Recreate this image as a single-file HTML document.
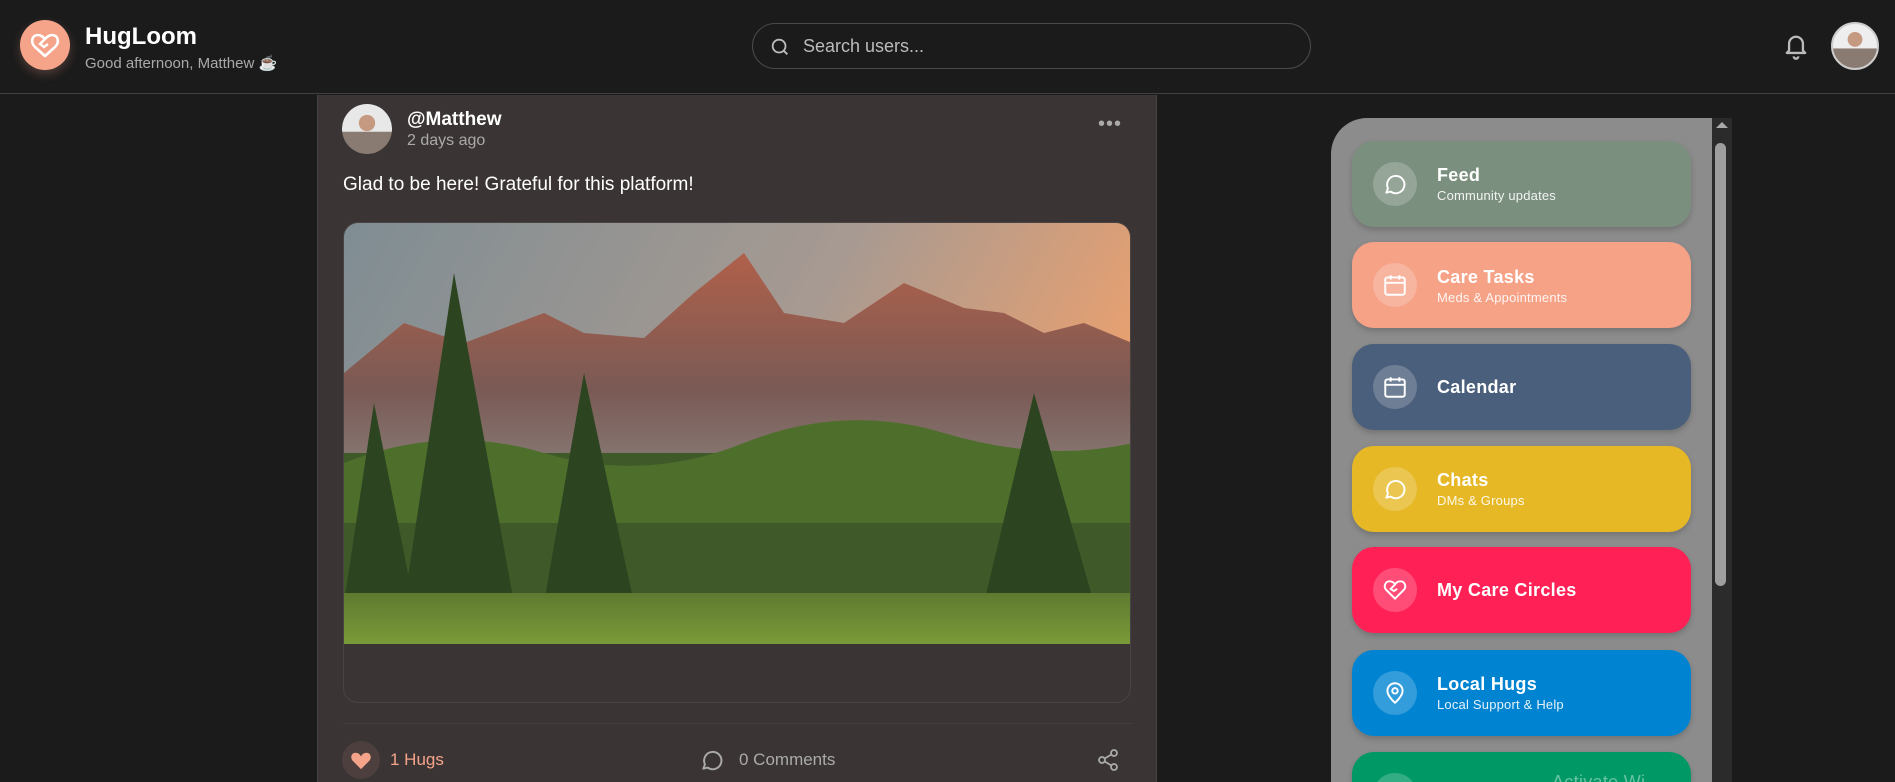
<!DOCTYPE html>
<html style="overflow:hidden;width:1895px;height:782px"><head><meta charset="utf-8"><style>
*{margin:0;padding:0;box-sizing:border-box}
body{width:1895px;height:782px;overflow:hidden;background:#1b1b1b;font-family:"Liberation Sans",sans-serif;position:relative;color:#fff}
.hdr{position:absolute;left:0;top:0;width:1895px;height:94px;border-bottom:1px solid #404040;background:#1b1b1b}
.abs{position:absolute}
.card{position:absolute;left:317px;top:95px;width:840px;height:687px;background:#3b3434;border-left:1px solid #444;border-right:1px solid #444}
.panel{position:absolute;left:1331px;top:118px;width:385px;height:664px;background:#8c8c8c;border-top-left-radius:36px}
.clip{position:absolute;left:0;top:0;width:1895px;height:782px;overflow:hidden}
.nav{position:absolute;left:1352px;width:339px;height:86px;border-radius:22px;box-shadow:0 3px 6px rgba(0,0,0,.18)}
.nav .ic{position:absolute;left:21px;top:21px;width:44px;height:44px;border-radius:50%;background:rgba(255,255,255,.2)}
.nav .ic svg{position:absolute;left:9px;top:9px}
.nav .t{position:absolute;left:85px;font-weight:bold;font-size:18px;letter-spacing:.3px}
.nav .s{position:absolute;left:85px;font-size:13px;opacity:.9;letter-spacing:.2px}
</style></head><body>
<div class="clip">
<div class="hdr">
 <div class="abs" style="left:20px;top:20px;width:50px;height:50px;border-radius:50%;background:#f5a48a;box-shadow:0 4px 10px rgba(245,164,138,.25)">
  <svg width="50" height="50" viewBox="0 0 50 50"><path d="M25 36 L15 27 C10 22 12 15 18 15 C21 15 23 17 25 19 C27 17 29 15 32 15 C38 15 40 22 35 27 Z" fill="none" stroke="#fff" stroke-width="2.6" stroke-linejoin="round"/><path d="M25 19 L20 24 L24 27 L28 24" fill="none" stroke="#fff" stroke-width="2.4"/></svg>
 </div>
 <div class="abs" style="left:85px;top:23px;font-size:24px;font-weight:bold">HugLoom</div>
 <div class="abs" style="left:85px;top:54px;font-size:15px;color:#aaa">Good afternoon, Matthew ☕</div>
 <div class="abs" style="left:752px;top:23px;width:559px;height:46px;border:1px solid #4a4a4a;border-radius:23px;background:#1b1b1b">
  <svg class="abs" style="left:16px;top:12px" width="22" height="22" viewBox="0 0 24 24" fill="none" stroke="#bbb" stroke-width="2"><circle cx="11" cy="11" r="7"/><path d="M16 16l4 4"/></svg>
  <div class="abs" style="left:50px;top:12px;font-size:18px;color:#bbb">Search users...</div>
 </div>
 <svg class="abs" style="left:1782px;top:31px" width="28" height="30" viewBox="0 0 24 26" fill="none" stroke="#bbb" stroke-width="2"><path d="M6 17V11a6 6 0 0 1 12 0v6l2 2H4z" stroke-linejoin="round"/><path d="M10 22a2 2 0 0 0 4 0"/></svg>
 <div class="abs" style="left:1831px;top:22px;width:48px;height:48px;border-radius:50%;background:radial-gradient(circle at 50% 35%,#c59a80 0 20%,transparent 21%),linear-gradient(#eee 0 55%,#8a7b72 56%);border:2px solid #ccc"></div>
</div>

<div class="card">
 <div class="abs" style="left:24px;top:9px;width:50px;height:50px;border-radius:50%;background:radial-gradient(circle at 50% 38%,#c59a80 0 20%,transparent 21%),linear-gradient(#e8e8e8 0 55%,#8a7b72 56%)"></div>
 <div class="abs" style="left:89px;top:14px;font-size:19px;font-weight:bold">@Matthew</div>
 <div class="abs" style="left:89px;top:37px;font-size:16px;color:#aaa">2 days ago</div>
 <div class="abs" style="left:780px;top:24px;font-size:20px;color:#aaa;letter-spacing:1px;line-height:10px">•••</div>
 <div class="abs" style="left:25px;top:79px;font-size:19px">Glad to be here! Grateful for this platform!</div>
 <div class="abs" style="left:25px;top:127px;width:788px;height:481px;border:1px solid #4a4343;border-radius:15px;overflow:hidden">
  <svg width="788" height="421" viewBox="0 0 788 421" preserveAspectRatio="none">
   <defs><linearGradient id="sk" x1="0" y1="0" x2="1" y2="0.3"><stop offset="0" stop-color="#7f8d93"/><stop offset=".6" stop-color="#a79a92"/><stop offset="1" stop-color="#e8a070"/></linearGradient>
   <linearGradient id="mt" x1="0" y1="0" x2="0" y2="1"><stop offset="0" stop-color="#b0604a"/><stop offset=".6" stop-color="#7a5a55"/><stop offset="1" stop-color="#8a7f7a"/></linearGradient>
   <linearGradient id="gr" x1="0" y1="0" x2="0" y2="1"><stop offset="0" stop-color="#5d7a30"/><stop offset="1" stop-color="#7a9a38"/></linearGradient></defs>
   <rect width="788" height="421" fill="url(#sk)"/>
   <path d="M0 150 L60 100 L120 120 L200 90 L240 110 L300 115 L350 70 L400 30 L440 90 L500 100 L560 60 L620 85 L660 90 L700 110 L740 100 L788 120 L788 260 L0 260Z" fill="url(#mt)"/>
   <rect y="230" width="788" height="191" fill="#3f5a28"/>
   <path d="M0 240 Q100 200 200 230 T400 220 T600 210 T788 220 L788 300 L0 300Z" fill="#4e6f2c"/>
   <path d="M60 380 L110 50 L170 380Z M200 380 L240 150 L290 380Z M640 380 L690 170 L750 380Z M0 380 L30 180 L70 380Z" fill="#2c4520"/>
   <rect y="370" width="788" height="51" fill="url(#gr)"/>
  </svg>
 </div>
 <div class="abs" style="left:25px;top:628px;width:790px;height:1px;background:#463e3e"></div>
 <div class="abs" style="left:24px;top:646px;width:38px;height:38px;border-radius:50%;background:#4c3f3d">
  <svg class="abs" style="left:8px;top:9px" width="22" height="20" viewBox="0 0 24 22"><path d="M12 21L3 12C0 9 1 3 6 3c3 0 5 2 6 4 1-2 3-4 6-4 5 0 6 6 3 9z" fill="#f5a48a"/></svg>
 </div>
 <div class="abs" style="left:72px;top:655px;font-size:17px;color:#f5a48a">1 Hugs</div>
 <svg class="abs" style="left:381px;top:652px" width="26" height="26" viewBox="0 0 24 24" fill="none" stroke="#aaa" stroke-width="1.8"><path d="M4 20l1.5-4A8 8 0 1 1 8 19z" stroke-linejoin="round"/></svg>
 <div class="abs" style="left:421px;top:655px;font-size:17px;color:#aaa">0 Comments</div>
 <svg class="abs" style="left:778px;top:652px" width="24" height="26" viewBox="0 0 24 24" fill="none" stroke="#aaa" stroke-width="1.8"><circle cx="18" cy="5" r="3"/><circle cx="6" cy="12" r="3"/><circle cx="18" cy="19" r="3"/><path d="M8.6 13.5l6.8 4M15.4 6.5l-6.8 4"/></svg>
</div>

<div class="panel"></div>
<div class="abs" style="left:1712px;top:118px;width:20px;height:664px;background:#2b2b2b"></div>
<div class="abs" style="left:1716px;top:122px;width:0;height:0;border-left:6px solid transparent;border-right:6px solid transparent;border-bottom:6px solid #aaa"></div>
<div class="abs" style="left:1715px;top:143px;width:11px;height:443px;border-radius:6px;background:#9e9e9e"></div>

<div class="nav" style="top:141px;background:#7b8f7f"><div class="ic"><svg width="26" height="26" viewBox="0 0 24 24" fill="none" stroke="#fff" stroke-width="1.8"><path d="M4 20l1.5-4A8 8 0 1 1 8 19z" stroke-linejoin="round"/></svg></div><div class="t" style="top:24px">Feed</div><div class="s" style="top:47px">Community updates</div></div>
<div class="nav" style="top:242px;background:#f6a287"><div class="ic"><svg width="26" height="26" viewBox="0 0 24 24" fill="none" stroke="#fff" stroke-width="1.8"><rect x="3" y="5" width="18" height="16" rx="2"/><path d="M3 10h18M8 3v4M16 3v4"/></svg></div><div class="t" style="top:25px">Care Tasks</div><div class="s" style="top:48px">Meds &amp; Appointments</div></div>
<div class="nav" style="top:344px;background:#4a5f7b"><div class="ic"><svg width="26" height="26" viewBox="0 0 24 24" fill="none" stroke="#fff" stroke-width="1.8"><rect x="3" y="5" width="18" height="16" rx="2"/><path d="M3 10h18M8 3v4M16 3v4"/></svg></div><div class="t" style="top:33px">Calendar</div></div>
<div class="nav" style="top:446px;background:#e6b825"><div class="ic"><svg width="26" height="26" viewBox="0 0 24 24" fill="none" stroke="#fff" stroke-width="1.8"><path d="M4 20l1.5-4A8 8 0 1 1 8 19z" stroke-linejoin="round"/></svg></div><div class="t" style="top:24px">Chats</div><div class="s" style="top:47px">DMs &amp; Groups</div></div>
<div class="nav" style="top:547px;background:#ff2156"><div class="ic"><svg width="26" height="26" viewBox="0 0 24 24" fill="none" stroke="#fff" stroke-width="1.8"><path d="M12 20L4 12C1 9 3 4 7 4c2 0 4 1 5 3 1-2 3-3 5-3 4 0 6 5 3 8z" stroke-linejoin="round"/><path d="M12 7l-4 4 3 2 3-2"/></svg></div><div class="t" style="top:33px">My Care Circles</div></div>
<div class="nav" style="top:650px;background:#0084d1"><div class="ic"><svg width="26" height="26" viewBox="0 0 24 24" fill="none" stroke="#fff" stroke-width="1.8"><path d="M12 21s-7-6-7-11a7 7 0 0 1 14 0c0 5-7 11-7 11z"/><circle cx="12" cy="10" r="2.5"/></svg></div><div class="t" style="top:24px">Local Hugs</div><div class="s" style="top:47px">Local Support &amp; Help</div></div>
<div class="nav" style="top:752px;background:#009966"><div class="ic"></div><div class="t" style="top:20px;left:200px;color:rgba(255,255,255,.4);font-weight:normal">Activate Wi</div></div>
</div>
</body></html>
